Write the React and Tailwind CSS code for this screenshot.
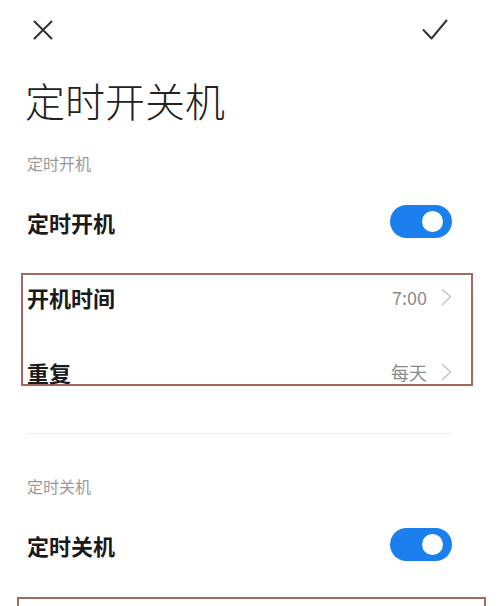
export default function App() {
  const font = { fontFamily: '"Noto Sans CJK SC", "Noto Sans", sans-serif' };

  const Toggle = () => (
    <div className="w-[62px] h-[33px] rounded-full bg-[#1b80ee] flex items-center justify-end pr-[9px]">
      <div className="w-[21px] h-[21px] rounded-full bg-white" />
    </div>
  );

  const Chevron = () => (
    <svg width="11" height="18" viewBox="0 0 11 18" fill="none">
      <path d="M1.5 1.5 L9.5 9 L1.5 16.5" stroke="#c4c4c4" strokeWidth="1.4" strokeLinecap="round" strokeLinejoin="round" />
    </svg>
  );

  return (
    <div className="w-[500px] h-[606px] bg-white overflow-hidden flex flex-col text-[#1a1a1a] [&>*]:shrink-0" style={font}>
      {/* top bar */}
      <div className="h-[60px] flex items-center justify-between pl-[33px] pr-[52px]">
        <svg width="20" height="20" viewBox="0 0 20 20" fill="none">
          <path d="M1.5 1.5 L18.5 18.5 M18.5 1.5 L1.5 18.5" stroke="#333" strokeWidth="2" strokeLinecap="round" />
        </svg>
        <svg width="26" height="22" viewBox="0 0 26 22" fill="none">
          <path d="M1.5 11 L9.5 19.5 L24.5 1.5" stroke="#333" strokeWidth="2" strokeLinecap="round" strokeLinejoin="round" />
        </svg>
      </div>

      <div className="mt-[20px] pl-[25px] text-[40px] leading-[40px] font-light text-[#222]">定时开关机</div>

      {/* power on */}
      <div className="mt-[35px] pl-[27px] text-[16px] leading-[16px] text-[#9a9a9a]">定时开机</div>
      <div className="mt-[34px] pl-[27px] pr-[48px] h-[33px] flex items-center justify-between">
        <span className="text-[22px] leading-[22px] font-bold">定时开机</span>
        <Toggle />
      </div>

      <div className="mt-[35px] ml-[21px] w-[452px] border-2 border-[#a46a60] pl-[4px] pr-[19px] pt-[11px] pb-[1px] flex flex-col">
        <div className="h-[22px] flex items-center justify-between">
          <span className="text-[22px] leading-[22px] font-bold">开机时间</span>
          <div className="flex items-center gap-[14px] text-[18px] text-[#8a8a8a]">
            <span>7:00</span>
            <Chevron />
          </div>
        </div>
        <div className="mt-[53px] h-[22px] flex items-center justify-between">
          <span className="text-[22px] leading-[22px] font-bold">重复</span>
          <div className="flex items-center gap-[14px] text-[18px] text-[#8a8a8a]">
            <span>每天</span>
            <Chevron />
          </div>
        </div>
      </div>

      <div className="mt-[47px] ml-[27px] w-[425px] h-px bg-[#ececec]" />

      {/* power off */}
      <div className="mt-[44px] pl-[27px] text-[16px] leading-[16px] text-[#9a9a9a]">定时关机</div>
      <div className="mt-[34px] pl-[27px] pr-[48px] h-[33px] flex items-center justify-between">
        <span className="text-[22px] leading-[22px] font-bold">定时关机</span>
        <Toggle />
      </div>

      <div className="mt-[36px] ml-[17px] w-[469px] h-[60px] border-2 border-[#a46a60]" />
    </div>
  );
}
